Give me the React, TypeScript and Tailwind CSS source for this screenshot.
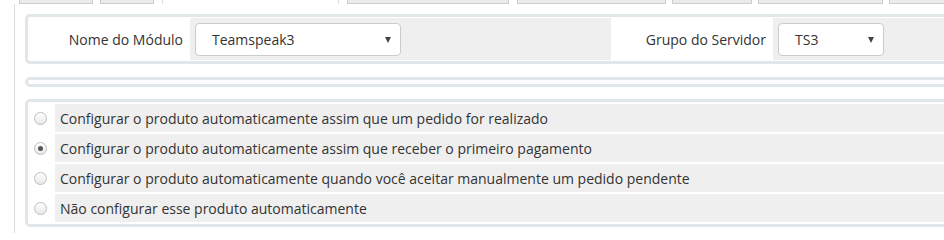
import React from "react";

const tabs = [
  { w: "w-[74px]", ml: "ml-[19px]" },
  { w: "w-[54px]", ml: "ml-[7px]" },
  { w: "w-[177px]", ml: "ml-[8px]", active: true },
  { w: "w-[162px]", ml: "ml-[8px]" },
  { w: "w-[149px]", ml: "ml-[8px]" },
  { w: "w-[80px]", ml: "ml-[6px]" },
  { w: "w-[125px]", ml: "ml-[6px]" },
  { w: "w-[100px]", ml: "ml-[6px]" },
];

const options = [
  "Configurar o produto automaticamente assim que um pedido for realizado",
  "Configurar o produto automaticamente assim que receber o primeiro pagamento",
  "Configurar o produto automaticamente quando você aceitar manualmente um pedido pendente",
  "Não configurar esse produto automaticamente",
];

function Select({ value, width }: { value: string; width: string }) {
  return (
    <div
      className={`${width} relative flex h-[33px] items-center rounded-[4px] border border-[#cccccc] bg-white pl-[16px] text-[#333]`}
    >
      <span>{value}</span>
      <span className="absolute right-[9px] top-[13px] h-0 w-0 border-l-[3px] border-r-[3px] border-t-[6px] border-l-transparent border-r-transparent border-t-[#444]" />
    </div>
  );
}

function Radio({ checked }: { checked?: boolean }) {
  return (
    <span className="ml-[4px] flex h-[13px] w-[13px] items-center justify-center rounded-full border border-[#bdbdbd] bg-gradient-to-b from-white to-[#e8e8e8]">
      {checked ? <span className="h-[5px] w-[5px] rounded-full bg-[#555]" /> : null}
    </span>
  );
}

export default function App() {
  return (
    <div className="h-[233px] w-[944px] overflow-hidden bg-white font-['Open_Sans',sans-serif] text-[14px] text-[#333]">
      <div className="w-[1240px]">
        {/* tabs strip */}
        <div className="flex h-[4px]">
          {tabs.map((t, i) =>
            t.active ? (
              <div key={i} className={`${t.ml} ${t.w} h-[4px] border-x border-[#dddddd] bg-white`} />
            ) : (
              <div
                key={i}
                className={`${t.ml} ${t.w} h-[4px] border-x border-b border-[#cdcdcd] bg-[#ebebeb]`}
              />
            )
          )}
        </div>

        {/* tab panel */}
        <div className="ml-[14px] h-[240px] border-l border-[#dddddd] pl-[10px] pt-[10px]">
          {/* module row */}
          <div className="flex rounded-[5px] border-[3px] border-[#e1e6e9] p-px">
            <div className="flex h-[42px] w-[161px] items-center justify-end pr-[7px]">Nome do Módulo</div>
            <div className="flex h-[42px] w-[421px] items-center bg-[#efefef] pl-[5px]">
              <Select value="Teamspeak3" width="w-[206px]" />
            </div>
            <div className="flex h-[42px] w-[162px] items-center justify-end pr-[7px]">Grupo do Servidor</div>
            <div className="flex h-[42px] w-[421px] items-center bg-[#efefef] pl-[5px]">
              <Select value="TS3" width="w-[106px]" />
            </div>
          </div>

          {/* empty box */}
          <div className="mt-[13px] h-[10px] rounded-[5px] border-[3px] border-[#e1e6e9]" />

          {/* auto setup options */}
          <div className="mt-[12px] flex flex-col gap-[2px] rounded-[5px] border-[3px] border-[#e1e6e9] p-[2px]">
            {options.map((o, i) => (
              <div key={o} className="flex gap-[2px]">
                <div className="flex h-[28px] w-[23px] items-center">
                  <Radio checked={i === 1} />
                </div>
                <div className="flex h-[28px] flex-1 items-center bg-[#efefef] pl-[5px]">{o}</div>
              </div>
            ))}
          </div>
        </div>
      </div>
    </div>
  );
}
